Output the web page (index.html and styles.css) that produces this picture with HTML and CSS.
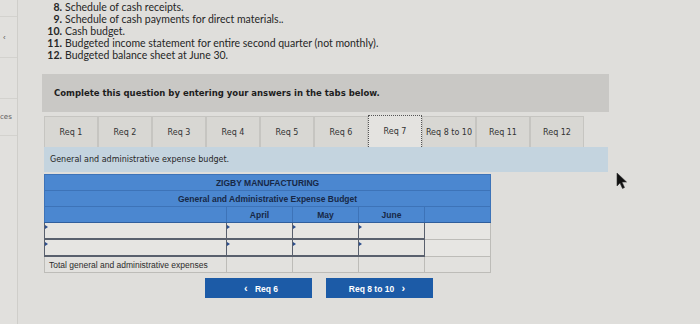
FILE: index.html
```html
<!DOCTYPE html>
<html lang="en">
<head>
  <meta charset="UTF-8" />
  <title>Master Budget - Req 7</title>
  <link rel="stylesheet" href="styles.css">
</head>
<body>
  <div class="page">
    <div class="sidebar">
      <div class="side-item">&lsaquo;</div>
      <div class="side-item"></div>
      <div class="side-item side-text">ces</div>
      <div class="side-item"></div>
    </div>

    <div class="main">
      <div class="req-list">
        <div class="req-line"><span class="num">8.</span> Schedule of cash receipts.</div>
        <div class="req-line"><span class="num">9.</span> Schedule of cash payments for direct materials..</div>
        <div class="req-line"><span class="num">10.</span> Cash budget.</div>
        <div class="req-line"><span class="num">11.</span> Budgeted income statement for entire second quarter (not monthly).</div>
        <div class="req-line"><span class="num">12.</span> Budgeted balance sheet at June 30.</div>
      </div>

      <div class="instructions">Complete this question by entering your answers in the tabs below.</div>

      <div class="tabs">
        <button class="tab">Req 1</button>
        <button class="tab">Req 2</button>
        <button class="tab">Req 3</button>
        <button class="tab">Req 4</button>
        <button class="tab">Req 5</button>
        <button class="tab">Req 6</button>
        <button class="tab active">Req 7</button>
        <button class="tab">Req 8 to 10</button>
        <button class="tab">Req 11</button>
        <button class="tab">Req 12</button>
      </div>

      <div class="tab-title">General and administrative expense budget.</div>

      <table class="budget">
        <colgroup>
          <col class="col-label">
          <col class="col-month">
          <col class="col-month">
          <col class="col-month">
          <col class="col-month">
        </colgroup>
        <tr class="head">
          <td colspan="5">ZIGBY MANUFACTURING</td>
        </tr>
        <tr class="head">
          <td colspan="5">General and Administrative Expense Budget</td>
        </tr>
        <tr class="head cols">
          <td></td>
          <td>April</td>
          <td>May</td>
          <td>June</td>
          <td></td>
        </tr>
        <tr class="entry">
          <td class="input"></td>
          <td class="input"></td>
          <td class="input"></td>
          <td class="input"></td>
          <td class="blank"></td>
        </tr>
        <tr class="entry">
          <td class="input"></td>
          <td class="input"></td>
          <td class="input"></td>
          <td class="input"></td>
          <td class="blank"></td>
        </tr>
        <tr class="total">
          <td class="label-cell">Total general and administrative expenses</td>
          <td></td>
          <td></td>
          <td></td>
          <td></td>
        </tr>
      </table>

      <div class="nav-buttons">
        <button class="nav-btn"><span class="chev">&lsaquo;</span> Req 6</button>
        <button class="nav-btn">Req 8 to 10 <span class="chev">&rsaquo;</span></button>
      </div>
    </div>
  </div>

  <svg class="cursor" width="12" height="18" viewBox="0 0 12 18">
    <path d="M1 1 L1 14 L4 11 L6.5 16.5 L8.5 15.5 L6 10 L10.5 10 Z" fill="#111" stroke="#333" stroke-width="0.6"/>
  </svg>
</body>
</html>
```

FILE: styles.css
```css
body {
  margin: 0;
  background: #dfdedb;
  color: #1f1f1f;
  font-family: 'Liberation Sans', Arial, sans-serif;
  overflow: hidden;
}

.page {
  display: flex;
  height: 324px;
}

.sidebar {
  width: 17px;
  border-right: 1px solid #cfceca;
  background: #e1e0dd;
  flex-shrink: 0;
  padding-top: 16px;
}

.side-item {
  height: 40px;
  border-top: 1px solid #d3d2ce;
  font-size: 8px;
  color: #5a5a5a;
  display: flex;
  align-items: center;
  padding-left: 3px;
}

.side-item.side-text {
  height: 36px;
  padding-left: 0;
  font-family: 'DejaVu Sans', sans-serif;
  font-size: 7px;
}

.main {
  flex: 1;
  padding-left: 24px;
}

.req-list {
  font-family: Lato, 'Open Sans', sans-serif;
  font-size: 10.5px;
  line-height: 12px;
  color: #262626;
  height: 74px;
  padding-top: 1px;
  box-sizing: border-box;
}

.req-line {
  display: flex;
}

.num {
  font-weight: bold;
  width: 20px;
  text-align: right;
  margin-right: 3px;
}

.instructions {
  width: 555px;
  height: 38px;
  background: #c9c8c5;
  font-family: 'DejaVu Sans', sans-serif;
  font-size: 8.5px;
  font-weight: bold;
  line-height: 38px;
  padding-left: 12px;
  color: #1d1d1d;
}

.tabs {
  display: flex;
  margin: 4px 0 0 2px;
  height: 31px;
}

.tab {
  width: 54px;
  height: 31px;
  background: #d8d7d3;
  border: 1px solid #c6c5c1;
  border-bottom: none;
  font-family: 'DejaVu Sans', sans-serif;
  font-size: 8px;
  color: #333;
  padding: 0;
  margin: 0;
  cursor: pointer;
}

.tab.active {
  background: #e4e3e0;
  border: 1px dotted #555;
  border-bottom: none;
  margin-top: -1px;
  height: 32px;
}

.tab-title {
  margin-left: 2px;
  width: 558px;
  height: 25px;
  line-height: 25px;
  background: #c4d4df;
  font-family: 'DejaVu Sans', sans-serif;
  font-size: 8px;
  color: #262626;
  padding-left: 6px;
}

.budget {
  margin: 2px 0 0 2px;
  border-collapse: collapse;
  table-layout: fixed;
  width: 446px;
  font-size: 8.5px;
}

.col-label {
  width: 182px;
}

.col-month {
  width: 66px;
}

.budget td {
  padding: 0;
  height: 15px;
  text-align: center;
}

.head td {
  background: #4b87d0;
  color: #172846;
  font-weight: bold;
  border: 1px solid #3d73b8;
}

.cols td {
  border-bottom: 1px solid #2f5e9c;
}

.entry td {
  height: 15px;
  position: relative;
}

.entry .input {
  background: #e6e5e2;
  border: 1px solid #59606d;
  border-bottom: 2px solid #59606d;
}

.entry .input::before {
  content: "";
  position: absolute;
  left: 0;
  top: 2px;
  border-top: 2px solid transparent;
  border-bottom: 2px solid transparent;
  border-left: 3px solid #2b4d8c;
}

.entry .blank {
  background: #e7e6e3;
  border: 1px solid #bdbcb8;
}

.total td {
  background: #e2e1de;
  border: 1px solid #bdbcb8;
  height: 15px;
}

.total .label-cell {
  text-align: left;
  padding-left: 4px;
  color: #2b2b2b;
  white-space: nowrap;
}

.nav-buttons {
  display: flex;
  gap: 14px;
  margin: 5px 0 0 163px;
}

.nav-btn {
  width: 107px;
  height: 20px;
  background: #1c5ba7;
  color: #fff;
  border: none;
  padding: 0;
  font-family: 'Liberation Sans', Arial, sans-serif;
  font-size: 8.5px;
  font-weight: bold;
  cursor: pointer;
}

.chev {
  font-size: 11px;
  margin: 0 5px;
}

.cursor {
  position: absolute;
  left: 616px;
  top: 172px;
}
```
